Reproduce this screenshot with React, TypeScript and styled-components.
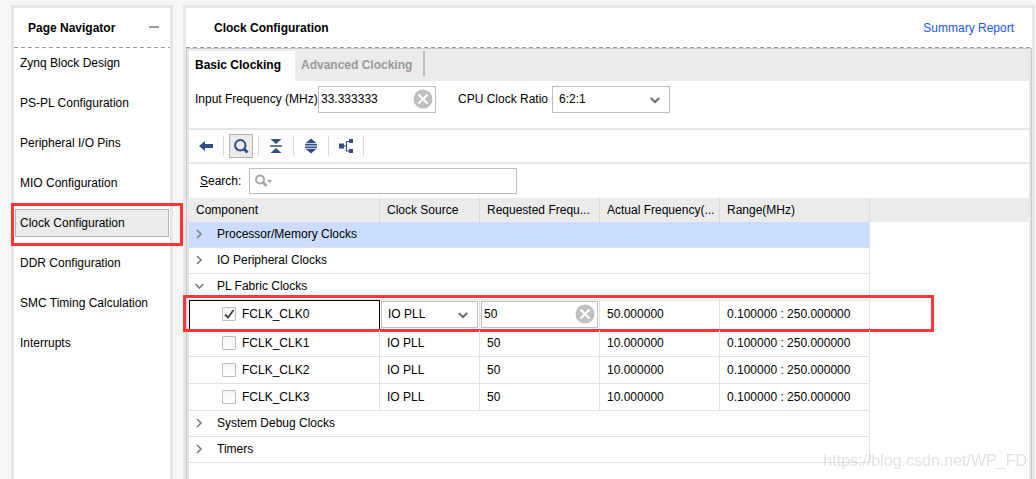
import React, { useState } from "react";
import styled, { createGlobalStyle } from "styled-components";

const GlobalStyle = createGlobalStyle`
  *, *::before, *::after { box-sizing: border-box; }
  body {
    margin: 0;
    background: #f6f6f6;
    color: #000;
    font: 12px/16px "Liberation Sans", Arial, sans-serif;
  }
  button, input, select { font: inherit; color: inherit; }
`;

const Shell = styled.div`
  display: flex;
  gap: 10px;
  height: 100vh;
  padding: 5px 1px 0 11px;
  overflow: hidden;
`;

const Sidebar = styled.aside`
  flex: none;
  width: 162px;
  border: 3px solid #e6e6e6;
  border-bottom: 0;
  background: #fff;
`;

const Main = styled.main`
  flex: 1;
  min-width: 0;
  display: flex;
  flex-direction: column;
  border: 3px solid #e6e6e6;
  border-bottom: 0;
  background: #fff;
`;

const PanelHeader = styled.header<{ $inset: number; $end: number }>`
  display: flex;
  flex: none;
  align-items: center;
  justify-content: space-between;
  height: 40px;
  padding: 0 ${(p) => p.$end}px 0 ${(p) => p.$inset}px;
  background: repeating-linear-gradient(90deg, #999 0 4px, transparent 4px 7px) bottom / 100% 1px no-repeat;
`;

const Title = styled.h2`
  margin: 0;
  font-size: 12px;
  font-weight: bold;
`;

const MinimizeButton = styled.button`
  width: 10px;
  height: 16px;
  padding: 0;
  border: 0;
  background: linear-gradient(#999, #999) center 6px / 10px 2px no-repeat;
`;

const ReportLink = styled.a`
  color: #1a56f0;
  text-decoration: none;
`;

const NavList = styled.nav`
  display: flex;
  flex-direction: column;
  gap: 12px;
  padding: 1px;
`;

const NavItem = styled.button<{ $active: boolean }>`
  position: relative;
  height: 28px;
  padding: 0 4px;
  border: 1px solid ${(p) => (p.$active ? "#b3b3b3" : "transparent")};
  background: ${(p) => (p.$active ? "#ebebeb" : "transparent")};
  text-align: left;
  white-space: nowrap;
`;

const NavHighlight = styled.span`
  position: absolute;
  top: -7px;
  right: -15px;
  bottom: -10px;
  left: -5px;
  border: 3px solid #fd3535;
  pointer-events: none;
`;

const RowHighlight = styled.span`
  position: absolute;
  top: -5px;
  bottom: -2px;
  left: -6px;
  width: 751px;
  border: 3px solid #fd3535;
  pointer-events: none;
`;

const Content = styled.section`
  flex: 1;
  border: 1px solid #c8c8c8;
  border-bottom: 0;
`;

const ContentInner = styled.div`
  height: 100%;
  border: 2px solid #e6e6e6;
  border-top-color: #ebebeb;
  border-bottom: 0;
`;

const TabBar = styled.div`
  display: flex;
  height: 30px;
  background: #ebebeb;
`;

const Tab = styled.button<{ $active: boolean }>`
  padding: 0 6px 3px;
  border: 0;
  width: ${(p) => (p.$active ? 106 : 128)}px;
  background: ${(p) => (p.$active ? "#fff" : "transparent")};
  color: ${(p) => (p.$active ? "#000" : "#999")};
  font-weight: bold;
  text-align: left;
  white-space: nowrap;
`;

const TabDivider = styled.span`
  width: 2px;
  height: 25px;
  background: #bdbdbd;
`;

const Settings = styled.div`
  display: flex;
  align-items: flex-start;
  gap: 22px;
  height: 49px;
  padding: 5px 6px 0;
  border-bottom: 2px solid #e6e6e6;
`;

const Field = styled.div<{ $label: number }>`
  display: grid;
  grid-template-columns: ${(p) => p.$label}px 118px;
  align-items: center;
  white-space: nowrap;
  label { padding-bottom: 2px; }
`;

const Control = styled.div`
  position: relative;
  height: 27px;
`;

const TextBox = styled.input`
  display: block;
  width: 100%;
  height: 100%;
  padding: 0 28px 2px 2px;
  border: 1px solid #bdbdbd;
  background: #fff;
  outline: 0;
`;

const SelectBox = styled.select`
  display: block;
  appearance: none;
  width: 100%;
  height: 100%;
  padding: 0 24px 2px 6px;
  border: 1px solid #bdbdbd;
  border-radius: 0;
  background: #fff;
  outline: 0;
`;

const SelectArrow = styled.svg`
  position: absolute;
  top: 11px;
  right: 10px;
  pointer-events: none;
`;

const ClearButton = styled.button`
  position: absolute;
  top: 3px;
  right: 3px;
  width: 20px;
  height: 20px;
  padding: 0;
  border: 0;
  background: none;
  svg { display: block; }
`;

const Toolbar = styled.div`
  display: flex;
  align-items: center;
  gap: 5px;
  height: 34px;
  padding: 0 5px;
  border-bottom: 2px solid #e6e6e6;
`;

const ToolButton = styled.button<{ $pressed?: boolean }>`
  display: flex;
  align-items: center;
  justify-content: center;
  width: 24px;
  height: 24px;
  padding: 0;
  border: 1px solid ${(p) => (p.$pressed ? "#b3b3b3" : "transparent")};
  background: ${(p) => (p.$pressed ? "#ebebeb" : "transparent")};
`;

const ToolDivider = styled.span`
  width: 1px;
  height: 20px;
  background: #d9d9d9;
`;

const SearchRow = styled.div`
  display: grid;
  grid-template-columns: 49px 268px;
  align-items: center;
  height: 34px;
  padding-left: 11px;
`;

const SearchControl = styled.div`
  position: relative;
  height: 26px;
`;

const SearchInput = styled(TextBox)`
  padding: 0 4px 0 28px;
`;

const SearchGlyph = styled.svg`
  position: absolute;
  top: 6px;
  left: 6px;
  pointer-events: none;
`;

const Table = styled.table`
  width: 100%;
  table-layout: fixed;
  border-collapse: separate;
  border-spacing: 0;
`;

const HeadCell = styled.th`
  height: 24px;
  padding: 0 4px 0 7px;
  border-right: 1px solid #d9d9d9;
  background: #ebebeb;
  font-weight: normal;
  text-align: left;
  white-space: nowrap;
  overflow: hidden;
  &:last-child { border-right: 0; }
`;

const GroupCell = styled.td<{ $selected: boolean }>`
  height: 26px;
  padding: 0;
  border-right: 1px solid #e2e2e2;
  border-bottom: 1px solid #e2e2e2;
  background: ${(p) => (p.$selected ? "#cbdcff" : "#fff")};
`;

const GroupToggle = styled.button`
  display: grid;
  grid-template-columns: 22px 1fr;
  align-items: center;
  width: 100%;
  height: 24px;
  padding: 0 0 2px 6px;
  border: 0;
  background: none;
  text-align: left;
`;

const ClockRow = styled.tr`
  position: relative;
`;

const Cell = styled.td<{ $tall: boolean; $focus?: boolean; $editor?: boolean }>`
  height: ${(p) => (p.$tall ? 30 : 27)}px;
  padding: ${(p) => (p.$editor ? "0 1px" : p.$tall ? "0 0 2px 7px" : "0 0 0 7px")};
  border: 0 solid ${(p) => (p.$focus ? "#000" : "#e2e2e2")};
  border-width: ${(p) => (p.$focus ? "1px" : "0 1px 1px 0")};
  white-space: nowrap;
`;

const CheckLabel = styled.label<{ $focus: boolean }>`
  display: flex;
  align-items: center;
  gap: 6px;
  padding-left: ${(p) => (p.$focus ? 25 : 26)}px;
`;

const CheckWrap = styled.span`
  position: relative;
  width: 14px;
  height: 14px;
  svg { position: absolute; top: 0; left: 0; pointer-events: none; }
`;

const CheckBox = styled.input`
  display: block;
  appearance: none;
  width: 14px;
  height: 14px;
  margin: 0;
  border: 1px solid #bdbdbd;
  border-radius: 1px;
  background: linear-gradient(#f4f4f4, #fff);
`;

const Watermark = styled.div`
  position: fixed;
  right: 9px;
  bottom: 9px;
  color: rgba(150, 150, 150, 0.28);
  font-size: 16px;
  line-height: 18px;
  pointer-events: none;
`;

const Arrow = () => (
  <SelectArrow width="10" height="7" viewBox="0 0 10 7" aria-hidden="true">
    <path d="M0.700 1l4.300 4 4.300-4" fill="none" stroke="#707070" strokeWidth="2.200" />
  </SelectArrow>
);

const Clear = () => (
  <ClearButton type="button" aria-label="Clear">
    <svg width="20" height="20" viewBox="0 0 20 20">
      <circle cx="10" cy="10" r="9.5" fill="#bfbfbf" />
      <path d="M5.5 5.5l9 9M14.5 5.5l-9 9" stroke="#fff" strokeWidth="2.2" />
    </svg>
  </ClearButton>
);

const Chevron = ({ open }: { open: boolean }) => (
  <svg width="10" height="10" viewBox="0 0 10 10" aria-hidden="true">
    <path d={open ? "M0.5 3l4 4 4-4" : "M2 1l4 4-4 4"} fill="none" stroke="#808080" strokeWidth="1.7" />
  </svg>
);

const INK = "#2f4f85";

const tools = [
  {
    name: "Back",
    art: <path d="M1 8l6-5v3h8v4H7v3z" fill={INK} />,
  },
  {
    name: "Search",
    pressed: true,
    art: (
      <g fill="none" stroke={INK}>
        <circle cx="7.3" cy="7.3" r="5.2" strokeWidth="2" />
        <path d="M11 11l3.5 3.5" strokeWidth="3" />
      </g>
    ),
  },
  {
    name: "Collapse All",
    art: <path d="M2.500 1h11L8 6zM2 7.200h12v1.600H2zM2.500 15h11L8 10z" fill={INK} />,
  },
  {
    name: "Expand All",
    art: <path d="M2.500 5.200h11L8 0.500zM2 6h12v1.500H2zM2 8.500h12V10H2zM2.500 10.800h11L8 15.500z" fill={INK} />,
  },
  {
    name: "Hierarchy",
    art: (
      <>
        <path d="M1 5.500h5v5H1zM11 1h4v4h-4zM11 11h4v4h-4z" fill={INK} />
        <path d="M6 8h2.500M11 3.500H8.500v9.500H11" fill="none" stroke={INK} strokeWidth="1.200" />
      </>
    ),
  },
];

const pages = [
  "Zynq Block Design",
  "PS-PL Configuration",
  "Peripheral I/O Pins",
  "MIO Configuration",
  "Clock Configuration",
  "DDR Configuration",
  "SMC Timing Calculation",
  "Interrupts",
];

const groups = ["Processor/Memory Clocks", "IO Peripheral Clocks", "PL Fabric Clocks", "System Debug Clocks", "Timers"];

const clocks = [
  { name: "FCLK_CLK0", enabled: true, actual: "50.000000" },
  { name: "FCLK_CLK1", enabled: false, actual: "10.000000" },
  { name: "FCLK_CLK2", enabled: false, actual: "10.000000" },
  { name: "FCLK_CLK3", enabled: false, actual: "10.000000" },
];

function FabricClock({ name, enabled, actual }: (typeof clocks)[number]) {
  const [checked, setChecked] = useState(enabled);
  return (
    <ClockRow>
      <Cell $tall={enabled} $focus={enabled}>
        <CheckLabel $focus={enabled}>
          <CheckWrap>
            <CheckBox type="checkbox" checked={checked} onChange={() => setChecked(!checked)} />
            {checked && (
              <svg width="14" height="14" viewBox="0 0 14 14" aria-hidden="true">
                <path d="M3 7.500l3 3 5.500-7.500" fill="none" stroke="#444" strokeWidth="1.800" />
              </svg>
            )}
          </CheckWrap>
          {name}
        </CheckLabel>
        {enabled && <RowHighlight />}
      </Cell>
      <Cell $tall={enabled} $editor={enabled}>
        {enabled ? (
          <Control>
            <SelectBox aria-label={`${name} source`} defaultValue="IO PLL">
              <option>IO PLL</option>
              <option>ARM PLL</option>
              <option>DDR PLL</option>
            </SelectBox>
            <Arrow />
          </Control>
        ) : (
          "IO PLL"
        )}
      </Cell>
      <Cell $tall={enabled} $editor={enabled}>
        {enabled ? (
          <Control>
            <TextBox aria-label={`${name} requested frequency`} defaultValue="50" />
            <Clear />
          </Control>
        ) : (
          "50"
        )}
      </Cell>
      <Cell $tall={enabled}>{actual}</Cell>
      <Cell $tall={enabled}>0.100000 : 250.000000</Cell>
    </ClockRow>
  );
}

export default function App() {
  const [page, setPage] = useState("Clock Configuration");
  const [open, setOpen] = useState<string[]>(["PL Fabric Clocks"]);
  const toggle = (group: string) =>
    setOpen(open.includes(group) ? open.filter((g) => g !== group) : [...open, group]);

  return (
    <>
      <GlobalStyle />
      <Shell>
        <Sidebar>
          <PanelHeader $inset={14} $end={11}>
            <Title>Page Navigator</Title>
            <MinimizeButton type="button" aria-label="Minimize" />
          </PanelHeader>
          <NavList>
            {pages.map((name) => (
              <NavItem key={name} type="button" $active={name === page} onClick={() => setPage(name)}>
                {name}
                {name === "Clock Configuration" && <NavHighlight />}
              </NavItem>
            ))}
          </NavList>
        </Sidebar>
        <Main>
          <PanelHeader $inset={28} $end={18}>
            <Title>Clock Configuration</Title>
            <ReportLink href="#summary">Summary Report</ReportLink>
          </PanelHeader>
          <Content>
            <ContentInner>
              <TabBar>
                <Tab type="button" $active>Basic Clocking</Tab>
                <Tab type="button" $active={false}>Advanced Clocking</Tab>
                <TabDivider />
              </TabBar>
              <Settings>
                <Field $label={123}>
                  <label htmlFor="input-frequency">Input Frequency (MHz)</label>
                  <Control>
                    <TextBox id="input-frequency" defaultValue="33.333333" />
                    <Clear />
                  </Control>
                </Field>
                <Field $label={94}>
                  <label htmlFor="clock-ratio">CPU Clock Ratio</label>
                  <Control>
                    <SelectBox id="clock-ratio" defaultValue="6:2:1">
                      <option>6:2:1</option>
                      <option>4:2:1</option>
                    </SelectBox>
                    <Arrow />
                  </Control>
                </Field>
              </Settings>
              <Toolbar>
                {tools.map((tool) => (
                  <React.Fragment key={tool.name}>
                    <ToolButton type="button" aria-label={tool.name} $pressed={tool.pressed}>
                      <svg width="16" height="16" viewBox="0 0 16 16">{tool.art}</svg>
                    </ToolButton>
                    <ToolDivider />
                  </React.Fragment>
                ))}
              </Toolbar>
              <SearchRow>
                <label htmlFor="search"><u>S</u>earch:</label>
                <SearchControl>
                  <SearchInput id="search" type="text" />
                  <SearchGlyph width="18" height="14" viewBox="0 0 18 14" aria-hidden="true">
                    <circle cx="5" cy="5.500" r="4" fill="none" stroke="#a6a6a6" strokeWidth="2" />
                    <path d="M8 8.500l3.500 3.500" stroke="#a6a6a6" strokeWidth="2.500" />
                    <path d="M12 6h5l-2.500 3z" fill="#a6a6a6" />
                  </SearchGlyph>
                </SearchControl>
              </SearchRow>
              <Table>
                <colgroup>
                  <col width="191" />
                  <col width="100" />
                  <col width="120" />
                  <col width="120" />
                  <col width="150" />
                  <col />
                </colgroup>
                <thead>
                  <tr>
                    <HeadCell>Component</HeadCell>
                    <HeadCell>Clock Source</HeadCell>
                    <HeadCell>Requested Frequ...</HeadCell>
                    <HeadCell>Actual Frequency(...</HeadCell>
                    <HeadCell>Range(MHz)</HeadCell>
                    <HeadCell />
                  </tr>
                </thead>
                <tbody>
                  {groups.map((group, i) => (
                    <React.Fragment key={group}>
                      <tr>
                        <GroupCell colSpan={5} $selected={i === 0}>
                          <GroupToggle type="button" aria-expanded={open.includes(group)} onClick={() => toggle(group)}>
                            <Chevron open={open.includes(group)} />
                            {group}
                          </GroupToggle>
                        </GroupCell>
                      </tr>
                      {group === "PL Fabric Clocks" &&
                        open.includes(group) &&
                        clocks.map((clock) => <FabricClock key={clock.name} {...clock} />)}
                    </React.Fragment>
                  ))}
                </tbody>
              </Table>
            </ContentInner>
          </Content>
        </Main>
      </Shell>
      <Watermark>https://blog.csdn.net/WP_FD</Watermark>
    </>
  );
}
